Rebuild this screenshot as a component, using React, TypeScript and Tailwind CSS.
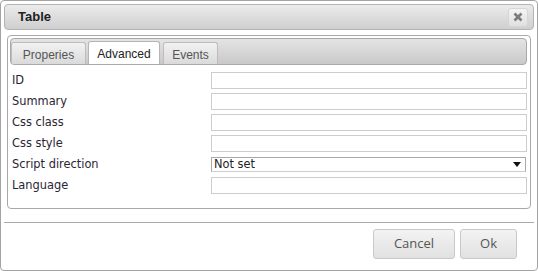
import React from "react";

const labelFont = { fontFamily: '"DejaVu Sans", Verdana, sans-serif' };

const fields = ["ID", "Summary", "Css class", "Css style", "Script direction", "Language"];

function CloseIcon() {
  return (
    <svg width="10" height="10" viewBox="0 0 10 10">
      <path d="M1.5 1.5 L8.5 8.5 M8.5 1.5 L1.5 8.5" stroke="#7b7b7b" strokeWidth="2.6" strokeLinecap="butt" />
    </svg>
  );
}

export default function App() {
  return (
    <div className="w-[538px] h-[271px] bg-white border border-[#a3a3a3] rounded-[4px] flex flex-col">
      <div className="mx-[3px] mt-[3px] h-[26px] flex items-center justify-between border border-[#b3b3b3] rounded-[4px] bg-gradient-to-b from-[#ebebeb] to-[#cfcfcf]">
        <span className="pl-[13px] text-[13px] font-bold text-[#222] font-['Liberation_Sans',Arial,sans-serif]">
          Table
        </span>
        <div className="mr-[5px] w-[20px] h-[19px] flex items-center justify-center rounded-[3px] bg-gradient-to-b from-[#f4f4f4] to-[#e0e0e0] border border-[#d6d6d6]">
          <CloseIcon />
        </div>
      </div>

      <div className="mx-[6px] mt-[5px] h-[174px] border border-[#a8a8a8] rounded-[4px] pt-[2px] pl-[2px] pr-[3px]">
        <div className="h-[27px] flex items-end border border-[#a9a9a9] rounded-[4px] bg-gradient-to-b from-[#e4e4e4] to-[#c9c9c9] overflow-hidden font-['Liberation_Sans',Arial,sans-serif] text-[12px]">
          <div className="w-[75px] h-[22px] pt-[3px] text-center text-[#555] bg-gradient-to-b from-[#f2f2f2] to-[#dadada] border border-b-0 border-[#bdbdbd] rounded-t-[3px]">
            Properies
          </div>
          <div className="ml-[2px] w-[72px] h-[23px] pt-[3px] text-center text-[#222] bg-white border border-b-0 border-[#b5b5b5] rounded-t-[3px]">
            Advanced
          </div>
          <div className="ml-[3px] w-[55px] h-[22px] pt-[3px] text-center text-[#555] bg-gradient-to-b from-[#f2f2f2] to-[#dadada] border border-b-0 border-[#bdbdbd] rounded-t-[3px]">
            Events
          </div>
        </div>
        <div className="mt-[5px] flex flex-col pl-[2px]" style={labelFont}>
          {fields.map((f) => (
            <div key={f} className="h-[21px] flex items-center">
              <span className="w-[199px] text-[11.4px] text-[#2b2533]">{f}</span>
              {f === "Script direction" ? (
                <div className="w-[315px] h-[15px] flex items-center justify-between bg-white border border-[#a9a9a9] border-b-[#cfcfcf] pl-[2px] pr-[4px]">
                  <span className="text-[11.4px] text-[#222] leading-none">Not set</span>
                  <svg width="8" height="5" viewBox="0 0 8 5">
                    <path d="M0 0 H8 L4 5 Z" fill="#111" />
                  </svg>
                </div>
              ) : (
                <div className="w-[317px] h-[17px] bg-white border border-[#cdcdcd]" />
              )}
            </div>
          ))}
        </div>
      </div>

      <div className="mx-[3px] mt-[13px] h-px bg-[#a9a9a9]" />

      <div className="mt-[6px] mr-[20px] flex justify-end gap-[5px] font-['Open_Sans',sans-serif] text-[13px] text-[#555]">
        <div className="w-[82px] h-[30px] flex items-center justify-center rounded-[3px] border border-[#c9c9c9] bg-gradient-to-b from-[#f3f3f3] to-[#e1e1e1]">
          Cancel
        </div>
        <div className="w-[57px] h-[30px] flex items-center justify-center rounded-[3px] border border-[#c9c9c9] bg-gradient-to-b from-[#f3f3f3] to-[#e1e1e1]">
          Ok
        </div>
      </div>
    </div>
  );
}
